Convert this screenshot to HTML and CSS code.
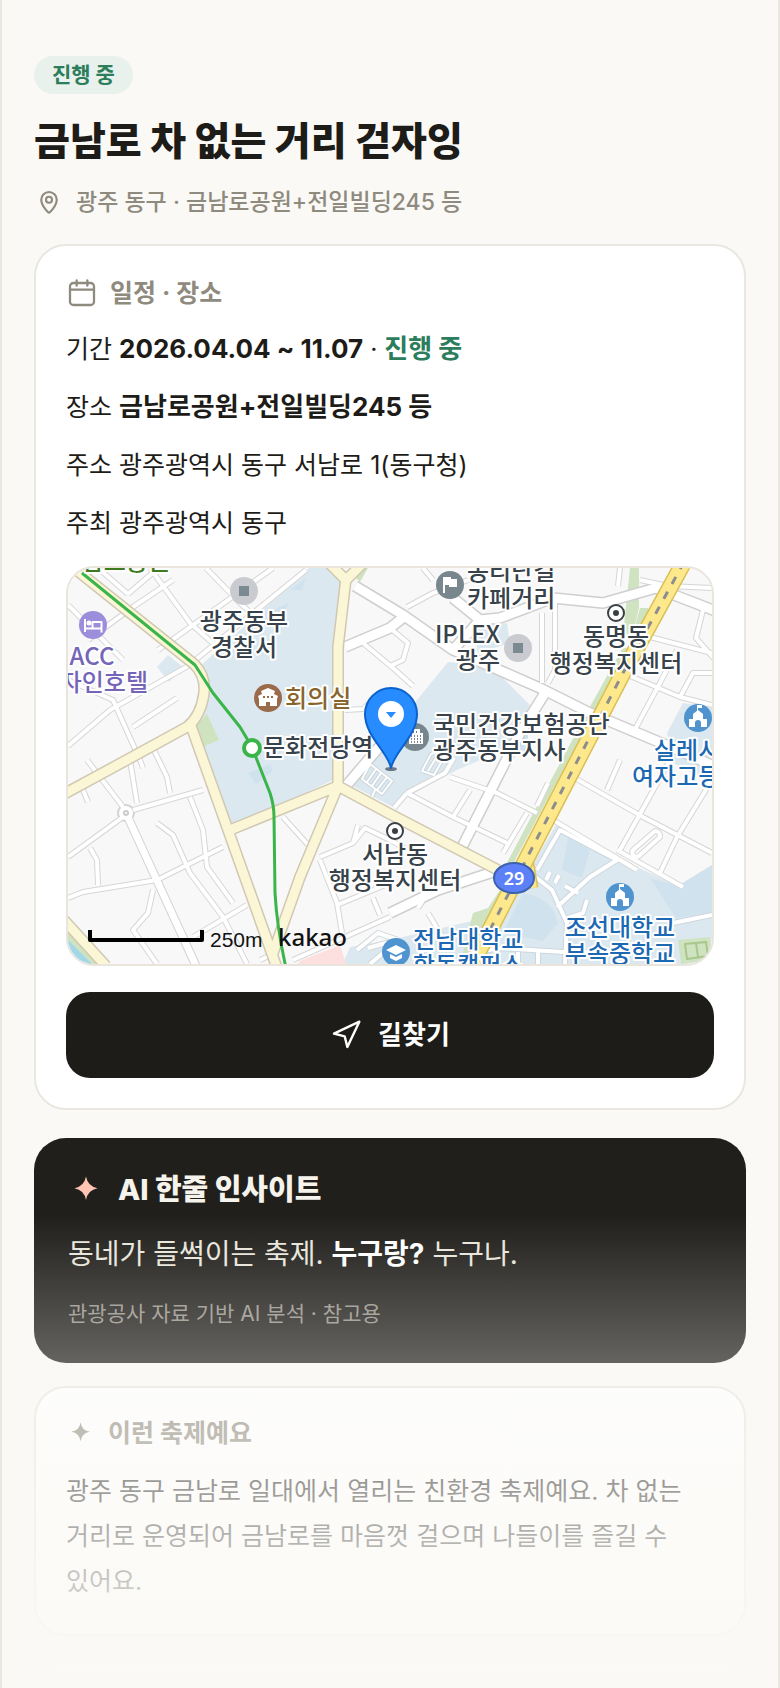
FILE: index.html
```html
<!DOCTYPE html>
<html lang="ko">
<head>
<meta charset="UTF-8">
<meta name="viewport" content="width=device-width,initial-scale=1.0">
<title>금남로 차 없는 거리 걷자잉</title>
<link rel="stylesheet" href="styles.css">
</head>
<body>
<main class="page">
<header class="head">
<span class="badge">진행 중</span>
<h1>금남로 차 없는 거리 걷자잉</h1>
<p class="place">
<svg class="icon-pin" viewBox="0 0 24 24"><path d="M12 20.500c-.7 0-6.200-5.600-6.200-10.300a6.200 6.200 0 0 1 12.400 0c0 4.700-5.500 10.300-6.200 10.300z"/><circle cx="12" cy="10.200" r="2.400"/></svg>
광주 동구 · 금남로공원+전일빌딩245 등
</p>
</header>

<section class="card">
<h2 class="label">
<svg class="icon-cal" viewBox="0 0 24 24"><rect x="3" y="4.500" width="18" height="16.500" rx="2.500"/><path d="M3 9.500h18M8 2.500v4M16 2.500v4"/></svg>
일정 · 장소
</h2>
<div class="rows">
<p>기간 <b>2026.04.04 ~ 11.07</b> · <b class="on">진행 중</b></p>
<p>장소 <b>금남로공원+전일빌딩245 등</b></p>
<p>주소 광주광역시 동구 서남로 1(동구청)</p>
<p>주최 광주광역시 동구</p>
</div>

<div class="map">
<svg viewBox="0 0 644 396" preserveAspectRatio="xMidYMid slice">
<defs>
<g id="small">
<path d="M82 0 122 55 149 79M138 0 172 35 186 48M0 37 55 92M205 0 90 82M105 12 65 39 20 72M30 0 60 26M60 26 88 2M238 2 120 98 42 142 0 178M0 112 45 132 72 192 75 200M65 159 109 130"/>
<path d="M19 192 55 239M55 249 0 289M65 242 135 222M0 330 15 324 89 312 155 279M89 255 105 267 122 305 155 349 179 396M122 229 135 262 139 299 165 335M22 280 29 292 30 317M85 322 80 345 65 362 89 396M179 337 125 369M62 192 69 235M85 180 99 209 102 225M15 222 20 234"/>
<path d="M215 249 242 279M252 289 285 275 297 260 322 272 345 285M285 275 290 257M252 292 269 335 274 365M269 337 322 315M305 330 312 347M225 392 322 349M192 392 207 385"/>
<path d="M382 209 429 225 469 245M339 225 385 249 439 275M402 222 385 249M459 245 435 285M339 225 377 205 386 190M339 225 326 240M505 209 575 249 644 285M552 192 539 222M602 192 552 282M644 212 609 269 592 305M549 282 615 319M485 252 569 302M480 215 469 238"/>
<path d="M555 105 612 129 644 137M582 69 644 85M609 82 592 115 565 165M487 32 487 102 480 115M474 45 474 115M339 39 365 25 400 12M355 0 365 12M552 0 550 18M572 12 600 18 644 20M635 42 628 70 650 95M612 129 625 105 644 105M322 60 340 75 335 92 322 98M295 75 325 100 345 118M277 142 295 141 303 133M422 355 400 372M360 345 378 375M300 380 322 374M350 340 360 325"/>
<path d="M565 282 587 263a5 5 0 0 1 5 6l-20 18a4 4 0 0 1-7-5z"/>
</g>
<g id="uni">
<path d="M469 302 492 262 549 292 522 309 489 339M465 307 484 322 499 355 497 396M519 332 515 345 500 350M605 355 644 347M412 384 430 380 495 384 560 384M478 312 482 304M487 315 491 307M497 318 510 325M450 384v12M470 384v12M289 382 310 365 330 372M302 396 315 385"/>
</g>
<g id="lot">
<path d="M302 196 324 213 314 226 294 211zM308 201 299 214M313 205 304 218M319 209 309 222M307 222 304 229M354 203 363 186 370 184M354 203 366 207 376 189M360 203 368 190"/>
</g>
<g id="big">
<path d="M287 18 335 47 385 82 472 120 522 145 610 182 650 200M277 79 322 60 337 48M385 82 412 52 432 50 485 30 535 35 588 20 650 44M477 125 452 165 394 279M322 345 370 322 425 304M278 218 312 178M385 30 412 52"/>
</g>
<g id="yellow">
<path d="M-4 -8 126 96Q138 108 136 125Q133 148 119 159L55 194 -4 226M123 158 160 262 209 400M162 262 270 218 322 246 430 302M262 -4 278 12 294 -4M278 10 270 79 270 218 232 309 205 385M-4 352 38 398"/>
</g>
<g id="castle"><path d="M-9 8V0h4v-5l5-4 5 4v5h4v8h-6V4a3 3 0 0 0-6 0v4zM-1 -8v-6h5v3h-4v3z" fill="#fff"/></g>
</defs>

<rect width="644" height="396" fill="#f8f8f8"/>
<g fill="#dce8f0">
<path d="M241 0H262L276 18 265 80V212L162 261 126 160 142 125 132 98z"/>
<path d="M100 87 115 99 101 114 89 99z"/>
<path d="M380 94 422 97 462 137 440 180 389 202 339 229 325 239 279 215 305 192 349 132z"/>
<path d="M439 55 442 75 410 85 405 60z"/>
<path d="M615 135 644 139V215L605 195 599 165z"/>
<path d="M489 255 549 290 582 305 610 318 644 297V396H405L450 322z"/>
<path d="M322 372 408 352 400 396H275L282 379z"/>
</g>
<path d="M582 310 610 318 644 297V344L608 350zM455 325q30 5 35 30l-15 18-40-8zM500 270l22 12-8 28-20-8z" fill="#d0e2ee"/>
<path d="M186 60 210 40 222 34 208 55zM222 22 238 10 234 22zM180 205 202 196 205 203 188 216zM440 165h20v18h-20z" fill="#d0e2ee"/>
<path d="M232 393 272 377 278 396H230z" fill="#fbe0df"/>
<g fill="#d0e3c1">
<path d="M562 0h9v40l-6 25-10 2z"/><path d="M572 40h8l3 10-12 20-6-5z"/>
<path d="M139 146 151 172 132 180 126 160z"/>
<path d="M405 345 420 340 432 322 436 330 408 396H392z"/>
<path d="M610 372 642 369 644 392 613 396z"/><path d="M294 0h6l-8 14-5-5z"/>
<path d="M0 362 34 396H20L0 376z"/>
</g>
<path d="M617 376 638 374 640 388 619 391zM628 375l2 14" fill="none" stroke="#a9c78d"/>
<path d="M0 372 24 396H0z" fill="#a2d7ea"/>
<path d="M558 80 522 145 495 196 466 250 430 318" fill="none" stroke="#d0e3c1" stroke-width="6"/>

<g class="road">
<use href="#small" stroke="#d6d6d6" stroke-width="6"/>
<use href="#lot" stroke="#ccd6dd" stroke-width="4"/>
<use href="#big" stroke="#cfcfcf" stroke-width="12"/>
<path d="M58 245 129 400" stroke="#d2d2d2" stroke-width="9"/>
<circle cx="58" cy="245" r="8" fill="#fff" stroke="#d2d2d2"/>
<use href="#uni" stroke="#ccd6dd" stroke-width="6"/>
<use href="#small" stroke="#fff" stroke-width="4"/>
<use href="#uni" stroke="#fff" stroke-width="4"/>
<use href="#lot" stroke="#fff" stroke-width="2"/>
<use href="#big" stroke="#fff" stroke-width="9"/>
<path d="M58 245 129 400" stroke="#fff" stroke-width="7"/>
<circle cx="58" cy="245" r="2" stroke="#ccc"/>
<use href="#yellow" stroke="#d0c8b2" stroke-width="12"/>
<use href="#yellow" stroke="#fbf6d6" stroke-width="9"/>
<path d="M460 285 466 320" stroke="#d9bf55" stroke-width="9"/>
<path d="M460 285 466 320" stroke="#fbe68b" stroke-width="6"/>
<path d="M616 -6 555 105 462 284 427 352 402 400" stroke="#d9bf55" stroke-width="17"/>
<path d="M616 -6 555 105 462 284 427 352 402 400" stroke="#fde88b" stroke-width="14"/>
<path d="M616 -6 555 105 462 284 427 352 402 400" class="dash"/>
<path d="M14 5 127 97 145 125 172 159 184 179 189 192 202 225Q206 237 206 249L207 325Q209 360 218 400" stroke="#39b54a" stroke-width="3"/>
</g>
<circle cx="184" cy="180" r="8" fill="#fff" stroke="#39b54a" stroke-width="4"/>

<!-- place icons -->
<circle cx="176" cy="23" r="14" fill="#c9cbd0"/><rect x="171" y="18" width="10" height="10" fill="#7b8990"/>
<circle cx="450" cy="80" r="14" fill="#c9cbd0"/><rect x="445" y="75" width="10" height="10" fill="#7b8990"/>
<circle cx="25" cy="57" r="14" fill="#9c8edb"/><path d="M17 51v13M17 60.500h16.500v4M33.500 60v-6h-9v6" fill="none" stroke="#fff" stroke-width="2"/><circle cx="21" cy="55" r="2.500" fill="#fff"/>
<circle cx="200" cy="130" r="14" fill="#9a6b4a"/><path d="M191 138v-7l-1-3 4-2-1-3 7-3 7 3-1 3 4 2-1 3v7h-7v-4h-4v4z" fill="#fff"/><path d="M195 129h2M199 129h2M203 129h2" stroke="#9a6b4a" stroke-width="2"/>
<circle cx="382" cy="17" r="14" fill="#78868e"/><path d="M375 9h8v2h6v8h-8v-2h-4v8h-2z" fill="#fff"/>
<circle cx="347" cy="169" r="14" fill="#78868e"/><path d="M341 176v-11h3v-4h8v4h3v11z" fill="#fff"/><path d="M343 168h11M343 171h11M343 174h11M345 164h6" stroke="#78868e" stroke-dasharray="1 2"/>
<g fill="#fff" stroke="#3a3f44" stroke-width="2"><circle cx="548" cy="45" r="8"/><circle cx="327" cy="263" r="8"/></g>
<g fill="#3a3f44"><circle cx="548" cy="45" r="3"/><circle cx="327" cy="263" r="3"/></g>
<g fill="#4f93cf"><circle cx="630" cy="150" r="14"/><circle cx="552" cy="329" r="14"/><circle cx="328" cy="384" r="14"/></g>
<use href="#castle" x="630" y="151"/><use href="#castle" x="552" y="330"/>
<path d="M328 377 338 382 328 387 318 382zM322 386 328 389 334 386V390L328 393 322 390z" fill="#fff"/>
<ellipse cx="446" cy="310" rx="20" ry="15" fill="#5b80f8" stroke="#3c62ae" stroke-width="2"/>
<text x="446" y="317" class="route">29</text>

<g class="names">
<text x="102" y="2" class="end park">금남로공원</text>
<text x="24" y="97" class="mid hotel">ACC</text>
<text x="80" y="123" class="end hotel">자인호텔</text>
<text x="176" y="62" class="mid">광주동부</text>
<text x="176" y="88" class="mid">경찰서</text>
<text x="217" y="139" class="hall">회의실</text>
<text x="195" y="188">문화전당역</text>
<text x="399" y="12">동리단길</text>
<text x="399" y="39">카페거리</text>
<text x="432" y="75" class="end">IPLEX</text>
<text x="432" y="101" class="end">광주</text>
<text x="548" y="77" class="mid">동명동</text>
<text x="548" y="104" class="mid">행정복지센터</text>
<text x="365" y="165">국민건강보험공단</text>
<text x="365" y="191">광주동부지사</text>
<text x="586" y="191" class="school">살레시오</text>
<text x="564" y="217" class="school">여자고등</text>
<text x="327" y="295" class="mid">서남동</text>
<text x="327" y="321" class="mid">행정복지센터</text>
<text x="345" y="380" class="school">전남대학교</text>
<text x="345" y="406" class="school">학동캠퍼스</text>
<text x="552" y="368" class="mid school">조선대학교</text>
<text x="552" y="394" class="mid school">부속중학교</text>
</g>

<ellipse cx="323" cy="201" rx="6" ry="2" fill="#6b7884"/>
<path d="M323 200C320 184 297 168 297 146a26 26 0 0 1 52 0C349 168 326 184 323 200z" fill="#268cff" stroke="#0c62cc"/>
<circle cx="323" cy="146" r="13" fill="#fff"/><path d="M318 144h10l-5 6z" fill="#268cff"/>

<path d="M22 362V372H134V362" fill="none" stroke="#000" stroke-width="4"/>
<text x="142" y="379" class="scale">250m</text>
<text x="210" y="378" class="kakao">kakao</text>
</svg>
</div>

<button type="button" class="route-btn">
<svg class="icon-nav" viewBox="0 0 24 24"><path d="M3 11 22 2 13 21 11 13z"/></svg>
길찾기
</button>
</section>

<section class="card insight">
<h2>
<svg class="star" viewBox="0 0 24 24"><path d="M12 3Q13.200 9.600 19.700 10.800Q13.200 12 12 18.600Q10.800 12 4.300 10.800Q10.800 9.600 12 3z"/></svg>
AI 한줄 인사이트
</h2>
<p class="line">동네가 들썩이는 축제. <b>누구랑?</b> 누구나.</p>
<p class="note">관광공사 자료 기반 AI 분석 · 참고용</p>
</section>

<section class="card about">
<h2 class="label">
<svg class="star" viewBox="0 0 24 24"><path d="M12.500 3Q13.500 10 20.500 11Q13.500 12 12.500 19Q11.500 12 4.500 11Q11.500 10 12.500 3z"/></svg>
이런 축제예요
</h2>
<p>광주 동구 금남로 일대에서 열리는 친환경 축제예요. 차 없는 거리로 운영되어 금남로를 마음껏 걸으며 나들이를 즐길 수 있어요.</p>
</section>

<section class="card next"></section>
<div class="fade"></div>
</main>
</body>
</html>
```
FILE: styles.css
```css
*{
box-sizing:border-box;
}
body{
margin:0;
background:#faf9f5;
color:#1d1c18;
font-family:Inter,"Noto Sans CJK KR",sans-serif;
font-size:25px;
line-height:42px;
word-break:keep-all;
}
h1,h2,p{
margin:0;
}
svg{
flex:none;
fill:none;
stroke:currentColor;
stroke-width:2;
stroke-linecap:round;
stroke-linejoin:round;
}
.page{
position:relative;
height:100vh;
overflow:hidden;
padding:56px 32px 0;
border:solid #e9e7e0;
border-width:0 2px;
}
.head{
display:flex;
flex-direction:column;
align-items:flex-start;
margin-bottom:25px;
}
.badge{
padding:0 18px;
border-radius:20px;
background:#e8f1ec;
color:#2c7d5b;
font-size:21px;
font-weight:700;
line-height:38px;
}
h1{
margin-top:19px;
font-size:39px;
font-weight:800;
line-height:56px;
}
.place{
display:flex;
align-items:center;
gap:12px;
margin-top:16px;
color:#8f8a7e;
font-size:23px;
font-weight:500;
line-height:34px;
}
.icon-pin{
width:30px;
height:30px;
stroke-width:1.7;
}
.card{
padding:30px;
border:2px solid #e9e7e0;
border-radius:32px;
background:#fff;
}
.label{
display:flex;
align-items:center;
gap:12px;
color:#8f8a7e;
font-size:25px;
font-weight:700;
line-height:34px;
}
.icon-cal{
width:32px;
height:32px;
stroke-width:1.7;
}
.rows{
display:flex;
flex-direction:column;
gap:16px;
margin:18px 0 22px;
}
b{
font-weight:700;
}
.rows b{
font-size:26px;
}
.on{
color:#2c7d5b;
}

/* map */
.map{
overflow:hidden;
border:2px solid #e9e5dd;
border-radius:28px;
line-height:0;
}
.map svg{
display:block;
width:100%;
height:auto;
stroke:none;
stroke-linecap:butt;
}
.road{
fill:none;
}
.dash{
stroke:#8d8d8d;
stroke-width:3;
stroke-dasharray:8 9;
}
.names text{
fill:#37424a;
stroke:#fff;
stroke-width:4;
paint-order:stroke;
font-family:"Noto Sans CJK KR",sans-serif;
font-size:24px;
font-weight:500;
}
.mid,.route{
text-anchor:middle;
}
.end{
text-anchor:end;
}
.names .park{
fill:#3f7a1f;
}
.names .hotel{
fill:#7465b8;
}
.names .hall{
fill:#87642c;
}
.names .school{
fill:#1c68b3;
}
.route{
fill:#fff;
font-family:"Noto Sans",sans-serif;
font-size:18px;
font-weight:600;
}
.scale{
fill:#111;
font-family:"Liberation Sans",sans-serif;
font-size:21px;
}
.kakao{
fill:#111;
font-family:"Noto Sans",sans-serif;
font-size:24px;
font-weight:500;
}

.route-btn{
display:flex;
align-items:center;
justify-content:center;
gap:16px;
width:100%;
height:86px;
margin-top:26px;
padding:0;
border:0;
border-radius:24px;
background:#1d1c18;
color:#fff;
font-family:inherit;
font-size:26px;
font-weight:700;
line-height:42px;
}
.icon-nav{
width:32px;
height:32px;
stroke-width:1.8;
}

/* ai insight */
.insight{
margin-top:28px;
padding:34px;
border:0;
background:#201f1b;
color:#f5f3ec;
}
.insight h2{
display:flex;
align-items:center;
gap:14px;
font-size:29px;
font-weight:800;
line-height:34px;
}
.star{
width:28px;
height:28px;
fill:currentColor;
stroke:none;
}
.insight .star{
width:36px;
height:36px;
color:#ffc5b3;
}
.line{
margin-top:22px;
padding-top:2px;
color:#e8e5db;
font-size:28px;
line-height:45px;
}
.line b{
color:#fff;
}
.note{
margin-top:22px;
color:#96928a;
font-size:21px;
line-height:30px;
}

.about{
margin-top:23px;
}
.about .label{
gap:14px;
line-height:30px;
}
.about p{
margin-top:21px;
line-height:45px;
}
.next{
height:200px;
margin-top:24px;
}
.fade{
position:absolute;
left:0;
right:0;
bottom:0;
height:28vh;
background:linear-gradient(rgba(250,249,245,0),#faf9f5);
}
```
